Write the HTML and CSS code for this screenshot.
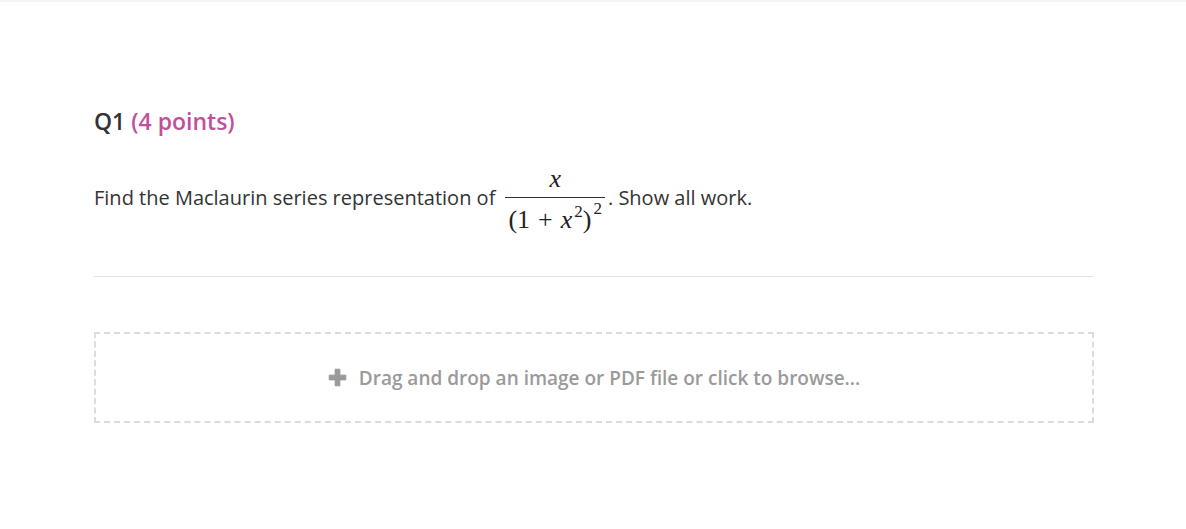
FILE: index.html
```html
<!DOCTYPE html>
<html>
<head>
<meta charset="utf-8">
<link rel="stylesheet" href="styles.css">
</head>
<body>
<div class="topbar"></div>
<main class="question">
  <h2 class="q-title">Q1 <span class="points">(4 points)</span></h2>
  <p class="q-text"><span>Find the Maclaurin series representation of</span><span class="frac"><span class="num"><i>x</i></span><span class="den">(1<span class="op">+</span><i>x</i><sup>2</sup>)<sup class="outer">2</sup></span></span><span>. Show all work.</span></p>
  <hr class="divider">
  <div class="dropzone">
    <span class="plus">
      <svg width="19" height="19" viewBox="0 0 16 16"><path d="M6 1h4v5h5v4h-5v5H6v-5H1V6h5z" fill="#9a9a9a" stroke="#9a9a9a" stroke-width="0.8" stroke-linejoin="round"/></svg>
    </span>
    <span>Drag and drop an image or PDF file or click to browse...</span>
  </div>
</main>
</body>
</html>
```

FILE: styles.css
```css
html, body { margin: 0; padding: 0; background: #fff; }
body { font-family: "Open Sans", "Noto Sans", sans-serif; color: #333; }
.topbar { height: 2px; background: #f3f3f3; }
.question { width: 1000px; margin-left: 94px; padding-top: 104px; }
.q-title { margin: 0; font-size: 23px; font-weight: 600; color: #333; line-height: 30px; }
.points { color: #c0509a; font-weight: 600; }
.q-text { margin: 30px 0 0 0; font-size: 20px; line-height: 28px; display: flex; align-items: center; white-space: pre; }
.frac { display: inline-flex; flex-direction: column; align-items: stretch; font-family: "Liberation Serif", serif; font-size: 26px; margin: 0 3px 0 10px; color: #222; }
.frac i { font-family: "Liberation Serif", serif; font-style: italic; }
.num { height: 32px; line-height: 26px; border-bottom: 1px solid #333; text-align: center; box-sizing: border-box; padding-bottom: 6px; }
.den { height: 32px; line-height: 44px; text-align: center; padding: 0 3px 0 3px; }
.op { margin: 0 8px; }
.den sup { font-size: 17px; vertical-align: 11px; line-height: 0; margin-left: 2px; }
.den sup.outer { vertical-align: 14px; margin-left: 2px; }
.divider { border: 0; border-top: 1px solid #e3e3e3; margin: 46px 0 0 0; }
.dropzone { margin-top: 55px; height: 87px; border: 2px dashed #dcdcdc; display: flex; align-items: center; justify-content: center; gap: 12px; color: #9a9a9a; font-size: 19px; font-weight: 600; }
.plus { display: flex; }
```
